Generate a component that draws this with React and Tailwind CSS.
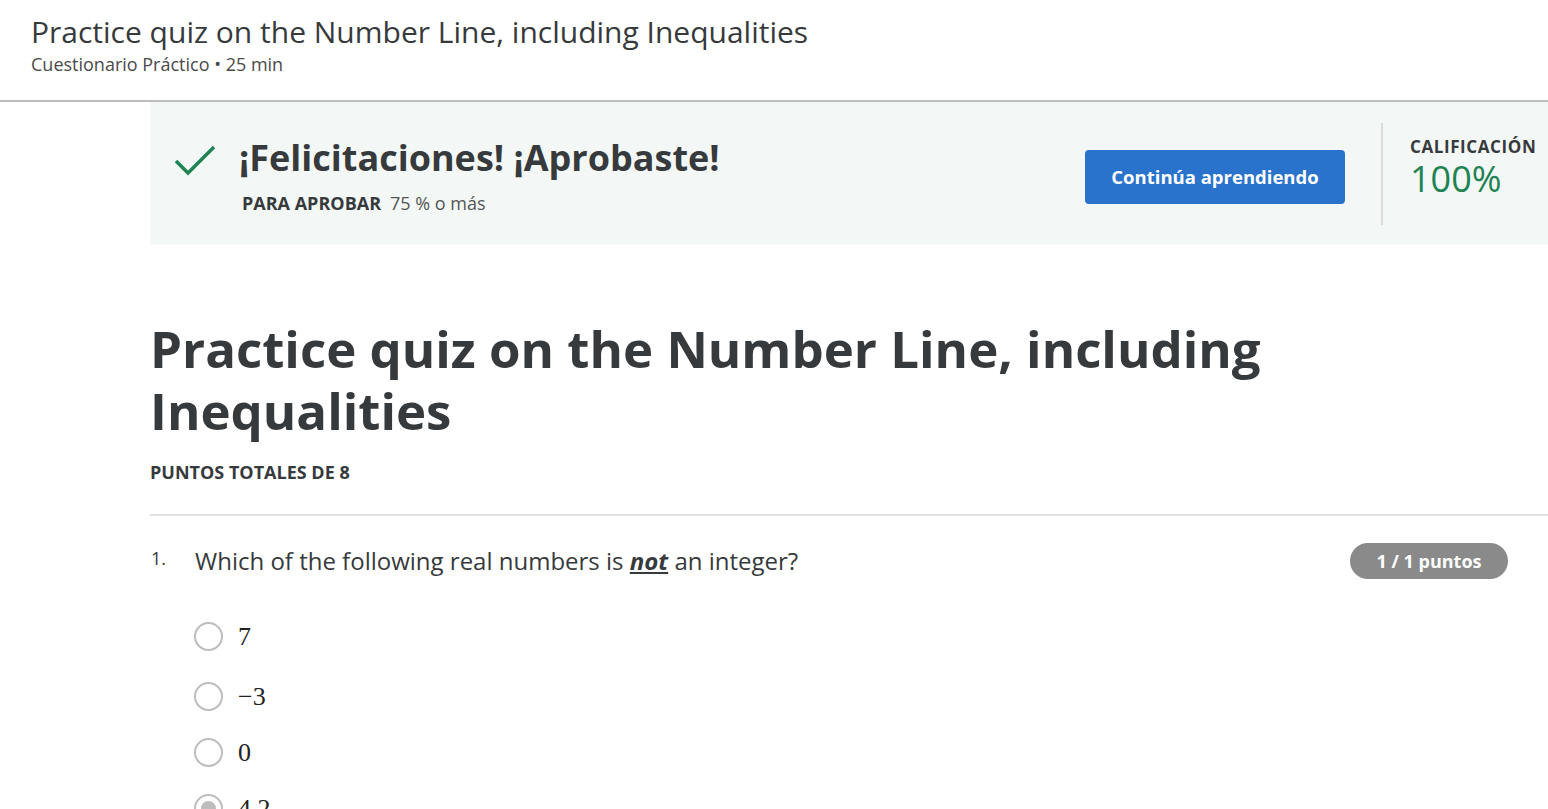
export default function App() {
  const options = [
    { label: "7", sel: false, mt: "mt-0" },
    { label: "\u22123", sel: false, mt: "mt-[31px]" },
    { label: "0", sel: false, mt: "mt-[27px]" },
    { label: "4.2", sel: true, mt: "mt-[27px]" },
  ];
  return (
    <div className="w-[1548px] h-[809px] overflow-hidden bg-white text-[#373a3c]" style={{ fontFamily: '"Open Sans", sans-serif' }}>
      <header className="h-[102px] border-b-2 border-[#bdbdbd] pl-[31px] pt-[13px]">
        <h1 className="text-[30px] leading-[38px] font-normal text-[#373a3c]">Practice quiz on the Number Line, including Inequalities</h1>
        <div className="text-[18px] leading-[22px] text-[#4a4a4a] mt-[2px]">Cuestionario Práctico • 25 min</div>
      </header>
      <main className="ml-[150px]">
        <section className="h-[143px] bg-[#f3f8f6] flex items-start">
          <div className="pl-[24px] pt-[42px]">
            <svg width="42" height="34" viewBox="0 0 42 34" fill="none">
              <path d="M2 17 L14 29 L40 3" stroke="#1f8354" strokeWidth="3.5" strokeLinecap="butt" />
            </svg>
          </div>
          <div className="pl-[23px] pt-[34px] flex-1">
            <div className="text-[36px] leading-[44px] font-bold text-[#373a3c]">¡Felicitaciones! ¡Aprobaste!</div>
            <div className="mt-[12px] text-[18px] leading-[22px] pl-[3px]">
              <span className="font-bold">PARA APROBAR</span>
              <span className="ml-[9px] text-[#555]">75 % o más</span>
            </div>
          </div>
          <div className="pt-[48px] pr-[34px]">
            <button className="w-[260px] h-[54px] rounded-[4px] bg-[#2a73cc] text-white text-[18.5px] font-bold">Continúa aprendiendo</button>
          </div>
          <div className="mt-[21px] ml-[2px] h-[102px] w-[2px] bg-[#dcdcdc]"></div>
          <div className="pl-[27px] pt-[34px] w-[165px]">
            <div className="text-[17px] leading-[22px] font-bold tracking-[0.6px] text-[#373a3c]">CALIFICACIÓN</div>
            <div className="text-[36px] leading-[42px] text-[#1f8354]">100%</div>
          </div>
        </section>
        <h2 className="mt-[72px] text-[51px] leading-[62px] font-bold text-[#373a3c]">Practice quiz on the Number Line, including Inequalities</h2>
        <div className="mt-[20px] text-[18px] leading-[22px] font-bold">PUNTOS TOTALES DE 8</div>
        <div className="mt-[31px] h-[2px] bg-[#e1e1e1]"></div>
        <div className="mt-[27px] flex items-start pr-[40px]">
          <div className="w-[45px] text-[18px] leading-[30px] text-[#373a3c] pl-[1px]">1.</div>
          <div className="flex-1 text-[24px] leading-[36px] text-[#373a3c]">
            Which of the following real numbers is <span className="font-bold italic underline">not</span> an integer?
          </div>
          <div className="h-[36px] w-[158px] rounded-full bg-[#8a8a8a] text-white text-[18px] font-bold flex items-center justify-center">1 / 1 puntos</div>
        </div>
        <div className="mt-[43px] pl-[44px] flex flex-col">
          {options.map((o, i) => (
            <div key={i} className={`flex items-center h-[29px] ${o.mt}`}>
              <div className="w-[29px] h-[29px] rounded-full border-[2.5px] border-[#bdbdbd] flex items-center justify-center">
                {o.sel && <div className="w-[15px] h-[15px] rounded-full bg-[#bdbdbd]"></div>}
              </div>
              <div className="ml-[15px] text-[26px] leading-[30px] text-[#222]" style={{ fontFamily: '"Liberation Serif", "DejaVu Serif", serif' }}>{o.label}</div>
            </div>
          ))}
        </div>
      </main>
    </div>
  );
}
